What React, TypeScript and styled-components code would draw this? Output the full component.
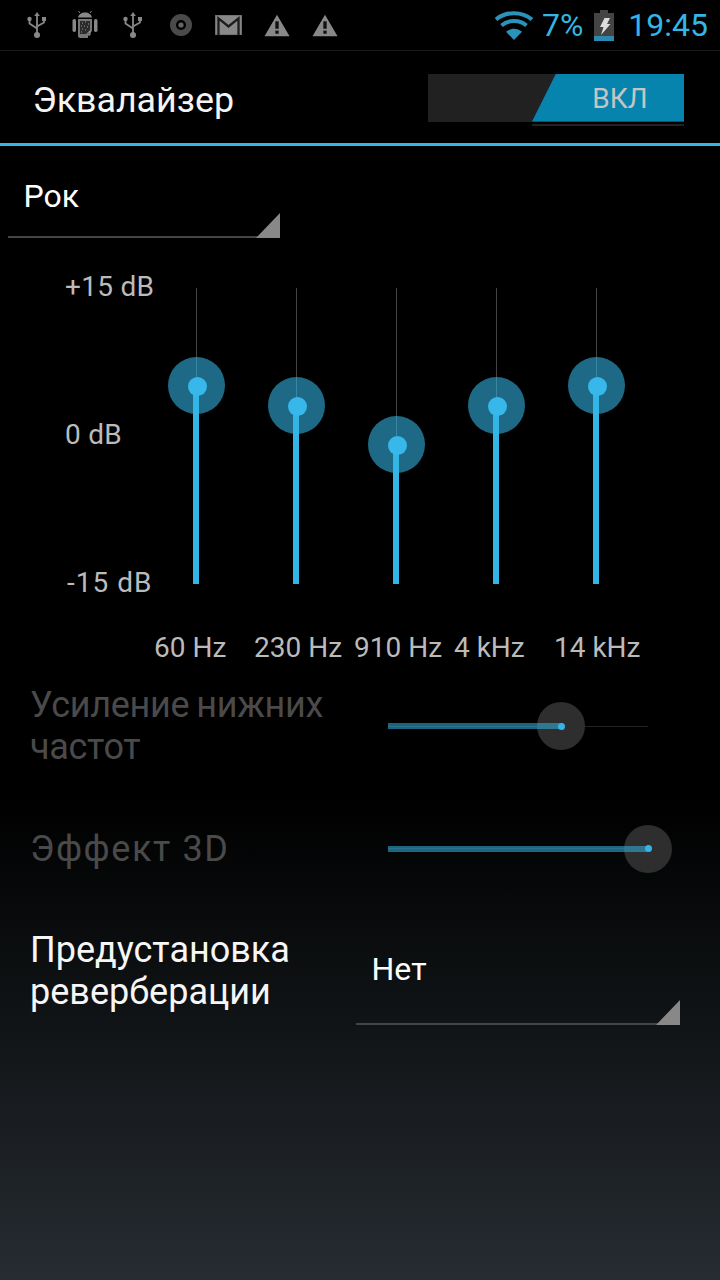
import styled, { createGlobalStyle } from 'styled-components';

const GlobalStyle = createGlobalStyle`
    html, body {
        margin: 0;
        padding: 0;
        background: #000;
    }
`;

const Page = styled.div`
    width: 720px;
    height: 1280px;
    overflow: hidden;
    display: flex;
    flex-direction: column;
    font-family: Roboto, "Noto Sans", sans-serif;
    background: linear-gradient(180deg, #000 0, #000 800px, #0f1214 1000px, #272c32 1280px);
`;

const StatusBar = styled.div`
    height: 50px;
    box-sizing: content-box;
    flex: none;
    display: flex;
    align-items: center;
    padding-left: 12.5px;
    border-bottom: 1px solid #1a1a1a;
`;

const NotifySlot = styled.div`
    width: 48px;
    height: 32px;
    display: flex;
    align-items: center;
    justify-content: center;
`;

const StatusRight = styled.div`
    margin-left: auto;
    margin-right: 12px;
    display: flex;
    align-items: center;
    color: #33b5e5;
    font-size: 32px;
`;

const StatusText = styled.span<{ $left: number }>`
    display: flex;
    margin-left: ${(p) => p.$left}px;
    line-height: 50px;
`;

const TitleBar = styled.div`
    height: 92px;
    flex: none;
    display: flex;
    align-items: center;
    justify-content: space-between;
    padding: 0 36px 0 32.5px;
    border-bottom: 3px solid #33b5e5;
`;

const Title = styled.h1`
    margin: 6px 0 0;
    font-size: 35.8px;
    font-weight: 400;
    color: #f4f4f4;
`;

const Switch = styled.div`
    position: relative;
    width: 256px;
    height: 48px;
    margin-top: 1px;
    background: #212121;
    display: flex;
    justify-content: flex-end;
`;

const SwitchThumb = styled.div`
    width: 152px;
    height: 48px;
    box-sizing: border-box;
    padding: 2px 0 0 24px;
    display: flex;
    align-items: center;
    justify-content: center;
    background: #0784ad;
    color: #c4c4c4;
    font-size: 28px;
    clip-path: polygon(24px 0, 100% 0, 100% 100%, 0 100%);
`;

const SwitchEdge = styled.div`
    position: absolute;
    right: 0;
    bottom: -4px;
    width: 152px;
    height: 2px;
    background: #222;
`;

const Spinner = styled.div<{ $width: number; $height: number; $left: number; $top: number }>`
    position: relative;
    width: ${(p) => p.$width}px;
    height: ${(p) => p.$height}px;
    margin-left: ${(p) => p.$left}px;
    margin-top: ${(p) => p.$top}px;
    flex: none;
    box-sizing: border-box;
    padding-left: 15.5px;
    border-bottom: 2px solid #444;
    color: #fff;
    font-size: 32px;
    line-height: 32px;
`;

const SpinnerCorner = styled.div`
    position: absolute;
    right: 0;
    bottom: -2px;
    width: 24px;
    height: 25px;
    background: #888;
    clip-path: polygon(100% 0, 100% 100%, 0 100%);
`;

const EqRow = styled.div`
    display: flex;
    margin-top: 33px;
`;

const Scale = styled.div`
    width: 146px;
    height: 327px;
    flex: none;
    box-sizing: border-box;
    padding: 1px 0 0 65px;
    display: flex;
    flex-direction: column;
    justify-content: space-between;
`;

const ScaleLabel = styled.div<{ $indent?: number; $spacing?: number }>`
    padding-left: ${(p) => p.$indent ?? 0}px;
    color: #bbb;
    font-size: 28px;
    line-height: 30px;
    letter-spacing: ${(p) => p.$spacing ?? 0.3}px;
    white-space: nowrap;
`;

const Band = styled.div`
    width: 100px;
    padding-top: 17px;
    display: flex;
    flex-direction: column;
`;

const BandTrack = styled.div`
    position: relative;
    width: 100px;
    height: 296px;
`;

const BandWire = styled.div`
    position: absolute;
    left: 49.5px;
    top: 0;
    width: 1px;
    height: 100%;
    background: #444;
`;

const BandFill = styled.div<{ $top: number }>`
    position: absolute;
    left: 47px;
    top: ${(p) => p.$top}px;
    bottom: 0;
    width: 6px;
    background: #33b5e5;
`;

const BandHalo = styled.div<{ $top: number }>`
    position: absolute;
    left: 22px;
    top: ${(p) => p.$top - 29}px;
    width: 57px;
    height: 57px;
    border-radius: 50%;
    background: rgba(51, 181, 229, 0.58);
`;

const BandKnob = styled.div<{ $top: number }>`
    position: absolute;
    left: 41.5px;
    top: ${(p) => p.$top - 9.5}px;
    width: 19px;
    height: 19px;
    border-radius: 50%;
    background: #38b8ea;
`;

const BandLabel = styled.div`
    margin-top: 49px;
    padding-left: 8px;
    color: #bbb;
    font-size: 28px;
    line-height: 30px;
    white-space: nowrap;
`;

const Options = styled.div`
    margin-top: 21px;
    padding-left: 30px;
    display: flex;
    flex-direction: column;
    gap: 59.5px;
`;

const OptionRow = styled.div<{ $align: string }>`
    display: flex;
    align-items: ${(p) => p.$align};
`;

const OptionLabel = styled.div<{ $dim?: boolean; $width: number; $spacing?: number; $wordGap?: number }>`
    width: ${(p) => p.$width}px;
    flex: none;
    color: ${(p) => (p.$dim ? '#4a4a4a' : '#f6f6f6')};
    font-size: 36px;
    line-height: 42px;
    letter-spacing: ${(p) => p.$spacing ?? 0}px;
    word-spacing: ${(p) => p.$wordGap ?? 0}px;
`;

const Slider = styled.div`
    position: relative;
    width: 260px;
    height: 6px;
    flex: none;
`;

const SliderRail = styled.div`
    position: absolute;
    left: 0;
    right: 0;
    top: 2.5px;
    height: 1px;
    background: #222;
`;

const SliderHalo = styled.div<{ $at: number }>`
    position: absolute;
    left: ${(p) => p.$at - 24}px;
    top: -21px;
    width: 48px;
    height: 48px;
    border-radius: 50%;
    background: #2e2e2e;
`;

const SliderFill = styled.div<{ $at: number }>`
    position: absolute;
    left: 0;
    top: 0;
    width: ${(p) => p.$at}px;
    height: 6px;
    background: rgba(51, 181, 229, 0.55);
`;

const SliderDot = styled.div<{ $at: number }>`
    position: absolute;
    left: ${(p) => p.$at - 3.5}px;
    top: -0.5px;
    width: 7px;
    height: 7px;
    border-radius: 50%;
    background: #33b5e5;
`;

const UsbIcon = () => (
    <svg width="20" height="26" viewBox="0 0 20 26">
        <g fill="none" stroke="#888" strokeWidth="1.8">
            <path d="M10 3v20" />
            <path d="M2.500 7v4.500l7.500 5" />
            <path d="M17 7v3.500l-7 4" />
        </g>
        <g fill="#888">
            <path d="M10 0l2.800 4H7.200z" />
            <circle cx="2.500" cy="7" r="2.200" />
            <rect x="15" y="5" width="4" height="4" />
            <circle cx="10" cy="23" r="3" />
        </g>
    </svg>
);

const AndroidIcon = () => (
    <svg width="26" height="28" viewBox="0 0 26 28">
        <path d="M6 6.500C6.500 3.500 9.500 1.500 13 1.500s6.500 2 7 5z" fill="#888" />
        <path d="M8 2 6.500 0M18 2l1.500-2" stroke="#888" strokeWidth="1" />
        <rect x="0.500" y="8" width="3.500" height="13" rx="1.700" fill="#888" />
        <rect x="22" y="8" width="3.500" height="13" rx="1.700" fill="#888" />
        <path d="M6 8h14v12l-4 4v3h-8c-1 0-2-1-2-2z" fill="#777" />
        <path d="M8 10h10v9l-4 4H8z" fill="#2b2b2b" />
        <path d="M10 12h1M13 11h1M16 13h1M9 15h1M12 15h1M15 16h1M10 18h1M13 19h1M9 21h1" stroke="#999" strokeWidth="1" />
        <path d="M18 20v4h-2" stroke="#aaa" strokeWidth="1" fill="none" />
    </svg>
);

const DiscIcon = () => (
    <svg width="24" height="24" viewBox="0 0 24 24">
        <circle cx="12" cy="12" r="11" fill="#4a4a4a" />
        <circle cx="12" cy="12" r="5" fill="#000" />
        <circle cx="12" cy="12" r="2.600" fill="#666" />
    </svg>
);

const MailIcon = () => (
    <svg width="27" height="21" viewBox="0 0 28 22">
        <rect x="0.500" y="0.500" width="27" height="20" fill="#888" stroke="#777" />
        <path d="M3.500 21V3.500L14 12 24.500 3.500V21" fill="none" stroke="#1c1c1c" strokeWidth="2.400" />
    </svg>
);

const WarnIcon = () => (
    <svg width="26" height="23" viewBox="0 0 28 24">
        <path d="M14 0.500 27.500 23.500H0.500z" fill="#888" />
        <rect x="12.200" y="7.500" width="3.600" height="8" fill="#111" />
        <rect x="12.200" y="17.500" width="3.600" height="3.400" fill="#111" />
    </svg>
);

const WifiIcon = () => (
    <svg width="40" height="30" viewBox="0 0 40 30">
        <g fill="none" stroke="#2a93bc" strokeWidth="4">
            <path d="M2 9.500C12 1 28 1 38 9.500" />
            <path d="M7.500 15.500C14.500 9.500 25.500 9.500 32.500 15.500" />
        </g>
        <path d="M12 21.800C17 17.800 23 17.800 28 21.800L20 30z" fill="#2a93bc" />
    </svg>
);

const BatteryIcon = () => (
    <svg width="20" height="31" viewBox="0 0 20 31">
        <path d="M6 0h8v3h6v23H0V3h6z" fill="#444" />
        <rect y="26" width="20" height="5" fill="#2a8ab0" />
        <path d="M10.500 8H16l-3 6h3.500L7 25l2.500-8H6z" fill="#ddd" />
    </svg>
);

const bands = [
    { label: '60 Hz', at: 98 },
    { label: '230 Hz', at: 118 },
    { label: '910 Hz', at: 157 },
    { label: '4 kHz', at: 118 },
    { label: '14 kHz', at: 98 },
];

const notifications = [UsbIcon, AndroidIcon, UsbIcon, DiscIcon, MailIcon, WarnIcon, WarnIcon];

export default function App() {
    return (
        <Page>
            <GlobalStyle />
            <StatusBar>
                {notifications.map((Icon, i) => (
                    <NotifySlot key={i}>
                        <Icon />
                    </NotifySlot>
                ))}
                <StatusRight>
                    <WifiIcon />
                    <StatusText $left={8}>7%</StatusText>
                    <StatusText $left={11}>
                        <BatteryIcon />
                    </StatusText>
                    <StatusText $left={14}>19:45</StatusText>
                </StatusRight>
            </StatusBar>
            <TitleBar>
                <Title>Эквалайзер</Title>
                <Switch>
                    <SwitchThumb>ВКЛ</SwitchThumb>
                    <SwitchEdge />
                </Switch>
            </TitleBar>
            <Spinner $width={272} $height={58} $left={8} $top={34}>
                Рок
                <SpinnerCorner />
            </Spinner>
            <EqRow>
                <Scale>
                    <ScaleLabel>+15 dB</ScaleLabel>
                    <ScaleLabel>0 dB</ScaleLabel>
                    <ScaleLabel $indent={2} $spacing={1}>
                        -15 dB
                    </ScaleLabel>
                </Scale>
                {bands.map((band) => (
                    <Band key={band.label}>
                        <BandTrack>
                            <BandWire />
                            <BandHalo $top={band.at} />
                            <BandFill $top={band.at} />
                            <BandKnob $top={band.at} />
                        </BandTrack>
                        <BandLabel>{band.label}</BandLabel>
                    </Band>
                ))}
            </EqRow>
            <Options>
                <OptionRow $align="center">
                    <OptionLabel $dim $width={358} $spacing={-0.3} $wordGap={-1.5}>
                        Усиление нижних частот
                    </OptionLabel>
                    <Slider>
                        <SliderRail />
                        <SliderHalo $at={173} />
                        <SliderFill $at={173} />
                        <SliderDot $at={173} />
                    </Slider>
                </OptionRow>
                <OptionRow $align="center">
                    <OptionLabel $dim $width={358} $spacing={1.6}>
                        Эффект 3D
                    </OptionLabel>
                    <Slider>
                        <SliderRail />
                        <SliderHalo $at={260} />
                        <SliderFill $at={260} />
                        <SliderDot $at={260} />
                    </Slider>
                </OptionRow>
                <OptionRow $align="flex-start">
                    <OptionLabel $width={326}>
                        Предустановка
                        <br />
                        реверберации
                    </OptionLabel>
                    <Spinner $width={324} $height={72} $left={0} $top={24}>
                        Нет
                        <SpinnerCorner />
                    </Spinner>
                </OptionRow>
            </Options>
        </Page>
    );
}
